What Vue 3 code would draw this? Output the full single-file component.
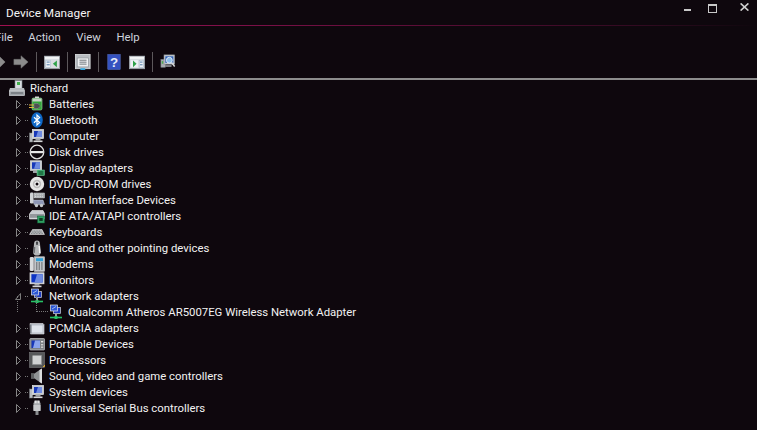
<template>
  <div class="window">
    <div class="titlebar">
      <span class="app-title">Device Manager</span>
      <div class="win-buttons">
        <span class="min"></span>
        <span class="max"></span>
        <svg class="close" width="9" height="8" viewBox="0 0 9 8"><path d="M.6.4 8.4 7.6M8.4.4.6 7.6" stroke="#cfcfcf" stroke-width="1.6" fill="none"/></svg>
      </div>
    </div>

    <div class="menubar">
      <span v-for="m in menus" :key="m">{{ m }}</span>
    </div>

    <div class="toolbar">
      <template v-for="(t, i) in tools" :key="i">
        <i v-if="t === '|'" class="sep"></i>
        <svg v-else class="tool" :class="'tool-' + t" viewBox="0 0 18 18" v-html="toolIcons[t]"></svg>
      </template>
    </div>

    <div class="tree">
      <div class="row root">
        <svg class="ico" viewBox="0 0 16 16" v-html="icons.root"></svg>
        <span>Richard</span>
      </div>
      <template v-for="row in devices" :key="row.name">
        <div class="row" :class="{ open: row.child }">
          <svg class="arrow" width="7" height="9" viewBox="0 0 7 9">
            <path v-if="row.child" d="M5.5 1.5v6h-5z" fill="none" stroke="#7a7a7a"/>
            <path v-else d="M1.5.5 5.5 4.5 1.5 8.5z" fill="none" stroke="#858585"/>
          </svg>
          <i class="dots"></i>
          <svg class="ico" viewBox="0 0 16 16" v-html="icons[row.icon]"></svg>
          <span>{{ row.name }}</span>
        </div>
        <div v-if="row.child" class="row child">
          <i class="trunk"></i>
          <i class="branch"></i>
          <svg class="ico" viewBox="0 0 16 16" v-html="icons.network"></svg>
          <span>{{ row.child }}</span>
        </div>
      </template>
    </div>
  </div>
</template>

<script setup>
const menus = ['File', 'Action', 'View', 'Help']
const tools = ['back', 'forward', '|', 'tree', '|', 'props', '|', 'help', 'pane', '|', 'scan']

const win = (inner) => `<rect x="0.5" y="2.5" width="17" height="14" fill="#d8dde2" stroke="#9aa1a8"/><rect x="1" y="3" width="16" height="2.5" fill="#f2f4f6"/>${inner}`
const toolIcons = {
  back: '<path d="M9 3 15 9 9 15V11.5H0V6.5H9z" fill="#8c8c8c"/>',
  forward: '<path d="M9 2 17 9 9 16V12H1V6H9z" fill="#8c8c8c" stroke="#6f6f6f" stroke-width=".6"/>',
  tree: win('<rect x="2" y="7" width="5.5" height="8" fill="#eef2f6" stroke="#9fb4c8" stroke-width=".6"/><rect x="3" y="8.5" width="3.4" height="1.2" fill="#5f88b0"/><rect x="3" y="11.5" width="3.4" height="1.2" fill="#5f88b0"/><path d="M14.5 7.2V15L10 11z" fill="#2fa24a"/>'),
  props: '<rect x="0.5" y="0.5" width="16.5" height="16" fill="#b8bcc1" stroke="#d4d7da"/><rect x="2.5" y="4.5" width="12.5" height="10" fill="#eef0f2" stroke="#8a9096" stroke-width=".7"/><path d="M5 7h8M5 9.2h8M5 11.4h8" stroke="#666c72" stroke-width="1"/><rect x="6" y="16" width="5.5" height="2" fill="#35a8e0"/>',
  help: '<rect x="2" y="0.5" width="14" height="17" fill="#3552c0" stroke="#5f7bd0" stroke-width=".5"/><text x="9" y="14.5" text-anchor="middle" font-family="Liberation Sans, sans-serif" font-size="15" font-weight="700" fill="#e8ecf8">?</text>',
  pane: win('<rect x="2" y="7" width="8" height="8" fill="#eef2f6"/><path d="M4.5 7.2V15L8.5 11z" fill="#2fa24a"/><rect x="11.5" y="7" width="4.5" height="8" fill="#eef2f6" stroke="#9fb4c8" stroke-width=".6"/><rect x="12.4" y="8.5" width="2.8" height="1.2" fill="#5f88b0"/><rect x="12.4" y="11.5" width="2.8" height="1.2" fill="#5f88b0"/>'),
  scan: '<rect x="1" y="6" width="5" height="9" fill="#a8adb2" stroke="#70757a" stroke-width=".6"/><rect x="2" y="8" width="1.6" height="3" fill="#4cb050"/><rect x="4.5" y="1" width="12" height="10.5" fill="#c9cdd2" stroke="#83888e" stroke-width=".7"/><rect x="6" y="2.6" width="9" height="7.4" fill="#2f62b8"/><circle cx="10.5" cy="7" r="3.3" fill="#8fc0ec" stroke="#e6eef6" stroke-width="1"/><path d="M13 9.5 16.5 14" stroke="#d4d7da" stroke-width="1.6"/><path d="M6 13.5h7" stroke="#a8adb2" stroke-width="1.6"/>',
}

const screen = '<rect x="3.5" y="1.5" width="11" height="9" fill="#c8ccd2" stroke="#e6e8ea" stroke-width=".7"/><rect x="5" y="3" width="8" height="6" fill="#1838b8"/><path d="M9 3h4v6H7z" fill="#6f8be0"/><rect x="6.5" y="10.5" width="5" height="2" fill="#9da1a6"/><rect x="4.5" y="12.5" width="9" height="1.6" fill="#d4d6d8"/>'
const tower = '<rect x="0.5" y="5" width="3.2" height="9" fill="#b8bcc0" stroke="#74787c" stroke-width=".5"/>'
const icons = {
  root: '<rect x="6" y="0.5" width="7" height="8" fill="#d8dce0" stroke="#7f858b" stroke-width=".6"/><rect x="8" y="2" width="3" height="3" fill="#42b04c"/><path d="M1 8h14l1 3H0z" fill="#b4b8bc"/><rect x="0.5" y="11" width="15" height="4.5" fill="#9ea3a8" stroke="#d4d7da" stroke-width=".7"/><path d="M2 13h12" stroke="#5c6166"/>',
  battery: '<rect x="3" y="2" width="10" height="12" rx="1.5" fill="#32a53a" stroke="#a8d8a8" stroke-width=".6"/><rect x="6" y="0.5" width="4" height="1.6" fill="#d5dbd5"/><rect x="3.5" y="2.5" width="9" height="3" fill="#c8d4c8"/><path d="M0 9h5.5M0 11.5h5.5" stroke="#e8b93c" stroke-width="1"/><path d="M5 7.5h4l2.5 2.5-2.5 2.5H5z" fill="#4d4f52" stroke="#8c8f92" stroke-width=".5"/>',
  bluetooth: '<ellipse cx="8" cy="8" rx="5.8" ry="7.8" fill="#0e68c8"/><path d="M5 5.2 10.6 10.6 8 13V3l2.6 2.4L5 10.8" fill="none" stroke="#fff" stroke-width="1.2"/>',
  computer: tower + screen,
  disk: '<circle cx="8" cy="8" r="6.8" fill="#0e070d" stroke="#e0e0e0" stroke-width="1.3"/><rect x="2" y="7" width="12" height="2.2" fill="#e8e8e8"/>',
  display: '<rect x="1.5" y="0.8" width="11" height="9.5" fill="#c8ccd2" stroke="#e6e8ea" stroke-width=".7"/><rect x="3" y="2.3" width="8" height="6.5" fill="#1838b8"/><path d="M7 2.3h4v6.5H5z" fill="#6f8be0"/><rect x="4" y="10.5" width="5" height="2.5" fill="#9da1a6"/><rect x="8" y="10" width="7.5" height="5.5" fill="#2f9f62" stroke="#7fd0a0" stroke-width=".5"/><path d="M9.5 12h4.5M9.5 14h4.5" stroke="#0d3a20" stroke-width=".8"/>',
  dvd: '<circle cx="8" cy="8" r="7.2" fill="#e6e6e6"/><circle cx="8" cy="8" r="4.2" fill="#bcbcbc"/><circle cx="8" cy="8" r="2.6" fill="#f6f6f6"/><circle cx="8" cy="8" r="1.5" fill="#0e070d"/>',
  hid: '<rect x="1" y="0.5" width="3.5" height="11" rx="1.2" fill="#d0d3d6"/><rect x="5" y="1" width="10.5" height="5" fill="#a4a8ac" stroke="#d8dadc" stroke-width=".5"/><path d="M6 2.8h8.5M6 4.6h8.5" stroke="#e8e8e8" stroke-width=".8" stroke-dasharray="1 .7"/><path d="M4 8h10l1.5 4.5H5z" fill="#8d96b6" stroke="#d0d4dc" stroke-width=".5"/><circle cx="7.5" cy="13.5" r="1.7" fill="#c4c8cc"/><circle cx="12.5" cy="13.5" r="1.7" fill="#c4c8cc"/>',
  ide: '<path d="M3 2.5h11l1.5 3v5.5H0.5V6z" fill="#c8ccd0" stroke="#eceeef" stroke-width=".6"/><rect x="1" y="6" width="14" height="3.8" fill="#94989c"/><rect x="8.5" y="8" width="7" height="7" fill="#2f9f62" stroke="#0f5c34" stroke-width=".5"/><rect x="10.3" y="10" width="3.4" height="3" fill="#0d3a20"/>',
  keyboard: '<path d="M3.5 5.5h9.5l2.5 5H0.5z" fill="#c4c7ca" stroke="#f0f0f0" stroke-width=".5"/><path d="M3.5 7h9M2.8 8.2h10.4M2 9.4h12" stroke="#55595d" stroke-width=".7" stroke-dasharray="1 .6"/>',
  mouse: '<path d="M5 4C5 1.6 6.2.5 8 .5S11 1.6 11 4l.8 8.5c0 2-1.6 3-3.8 3s-3.8-1-3.8-3z" fill="#b4b6b8"/><rect x="7.2" y="1.5" width="1.6" height="3.5" rx=".8" fill="#2e3033"/><path d="M5.6 7 5.2 13" stroke="#6e7174" stroke-width="1.4"/><path d="M10.2 6 10.8 13" stroke="#f4f4f4" stroke-width="1.4"/>',
  modem: '<rect x="0.8" y="1" width="4" height="14" rx="1.2" fill="#d8dadc"/><rect x="5.5" y="0.8" width="10" height="14.5" fill="#c2c6ca" stroke="#e6e8ea" stroke-width=".5"/><rect x="7" y="2.2" width="7" height="3" fill="#2ea0d8"/><path d="M7 7h7M7 9h7M7 11h7M7 13h7" stroke="#3c4044" stroke-width="1" stroke-dasharray="1.4 1.2"/>',
  monitor: '<rect x="1" y="0.8" width="14" height="11" fill="#c8ccd2" stroke="#e8eaec" stroke-width=".7"/><rect x="2.4" y="2.2" width="11.2" height="8.2" fill="#0e34c4"/><path d="M8 2.2h5.6v8.2H5.5z" fill="#6f8be0"/><rect x="5.5" y="12" width="5" height="1.6" fill="#9da1a6"/><rect x="3.5" y="13.6" width="9" height="1.6" fill="#d4d6d8"/>',
  network: '<rect x="5.5" y="3.5" width="7" height="6" fill="#1c3cc0" stroke="#d4d8dc" stroke-width=".7"/><rect x="2.5" y="1" width="7" height="6" fill="#2c56d4" stroke="#e4e6e8" stroke-width=".7"/><path d="M4 5 8 2.5" stroke="#9fb8f0"/><path d="M8 10v3" stroke="#d8dadc" stroke-width="1.4"/><path d="M2 13.5h12" stroke="#27c267" stroke-width="1.6"/><rect x="6.5" y="12" width="3" height="3" fill="#27c267"/>',
  pcmcia: '<path d="M1 3.5h13l1 1v9.5H1.5z" fill="#b8bec8" stroke="#e4e6ea" stroke-width=".6"/><rect x="2.5" y="5.5" width="11" height="7" fill="#dfe4ec"/><rect x="1" y="4.5" width="1.5" height="9" fill="#7a8088"/>',
  portable: '<rect x="0.8" y="2.5" width="14.8" height="11.5" rx="1" fill="#7e8286" stroke="#d8dadc" stroke-width=".6"/><rect x="2.5" y="4.5" width="8.5" height="7.5" fill="#1838b8"/><path d="M6 4.5h5V12H4z" fill="#8aa4ec"/><rect x="12" y="5" width="2.2" height="1.4" fill="#e6e6e6"/><rect x="12" y="8" width="2.2" height="1.4" fill="#d0d0d0"/><rect x="12" y="10.5" width="2.2" height="1.4" fill="#d0d0d0"/>',
  cpu: '<rect x="0.5" y="0.5" width="15" height="15" fill="#56585a" stroke="#77797b" stroke-width=".6"/><rect x="3.5" y="3.5" width="9" height="9" fill="#cfd1d2"/><path d="M3.5 12.5h9v-9" fill="none" stroke="#8e9092"/><path d="M14 14.5h1.5V13" fill="none" stroke="#d8a830" stroke-width="1"/>',
  sound: '<path d="M10.5 2 13 .5V15.5L10.5 14 5.5 10.5H2V5.5H5.5z" fill="#8f9294"/><path d="M10.5 2 13 .5V15.5L10.5 14z" fill="#dcdedf"/><rect x="2" y="5.5" width="3" height="5" fill="#5e6062"/>',
  usb: '<path d="M5.5 0.5h5l1 3v7h-7v-7z" fill="#a8abae"/><rect x="6" y="0.8" width="1.6" height="2.4" fill="#e4e4e4"/><rect x="8.6" y="0.8" width="1.6" height="2.4" fill="#e4e4e4"/><rect x="4.5" y="5" width="7" height="6" fill="#c8cacc"/><rect x="6.5" y="11" width="3" height="4" fill="#8a8d90"/>',
}

const devices = [
  { name: 'Batteries', icon: 'battery' },
  { name: 'Bluetooth', icon: 'bluetooth' },
  { name: 'Computer', icon: 'computer' },
  { name: 'Disk drives', icon: 'disk' },
  { name: 'Display adapters', icon: 'display' },
  { name: 'DVD/CD-ROM drives', icon: 'dvd' },
  { name: 'Human Interface Devices', icon: 'hid' },
  { name: 'IDE ATA/ATAPI controllers', icon: 'ide' },
  { name: 'Keyboards', icon: 'keyboard' },
  { name: 'Mice and other pointing devices', icon: 'mouse' },
  { name: 'Modems', icon: 'modem' },
  { name: 'Monitors', icon: 'monitor' },
  { name: 'Network adapters', icon: 'network', child: 'Qualcomm Atheros AR5007EG Wireless Network Adapter' },
  { name: 'PCMCIA adapters', icon: 'pcmcia' },
  { name: 'Portable Devices', icon: 'portable' },
  { name: 'Processors', icon: 'cpu' },
  { name: 'Sound, video and game controllers', icon: 'sound' },
  { name: 'System devices', icon: 'computer' },
  { name: 'Universal Serial Bus controllers', icon: 'usb' },
]
</script>

<style>
html, body {
  margin: 0;
  background: #0e070d;
}
</style>

<style scoped>
.window {
  width: 757px;
  height: 430px;
  overflow: hidden;
  background: #0e070d;
  color: #f2f2f2;
  font-family: Roboto, "Open Sans", sans-serif;
  font-size: 11.35px;
}

.titlebar {
  height: 25px;
  display: flex;
  align-items: center;
  justify-content: space-between;
  padding-left: 6px;
  border-bottom: 1px solid;
  border-image: linear-gradient(to right, #a01050, #80104a 30%, #300a20 85%, #0e070d) 1;
  box-sizing: content-box;
}

.app-title {
  font-size: 11.8px;
  color: #f4f4f4;
}

.win-buttons {
  display: flex;
  align-items: flex-start;
  height: 25px;
}

.min {
  width: 7px;
  height: 2px;
  margin: 9px 17px 0 0;
  background: #c8c8c8;
}

.max {
  width: 7px;
  height: 6px;
  margin: 4px 23px 0 0;
  border: 1px solid #c8c8c8;
  border-top-width: 2px;
}

.close {
  margin: 3px 8px 0 0;
}

.menubar {
  height: 22px;
  display: flex;
  align-items: center;
  gap: 15.5px;
  margin-left: -5px;
  color: #cfd3dc;
}

.toolbar {
  height: 27px;
  padding-bottom: 3px;
  display: flex;
  align-items: center;
  margin-left: -8px;
}

.tool {
  width: 16px;
  height: 16px;
  flex: none;
}

.sep {
  width: 1px;
  height: 20px;
  background: #5c585b;
  flex: none;
  margin: 0 7px;
}

.tool-forward {
  margin-left: 5px;
}

.tool-pane {
  margin-left: 7px;
}

.tree {
  border-top: 2px solid #8c8c8c;
}

.row {
  height: 16px;
  display: flex;
  align-items: center;
  white-space: nowrap;
  position: relative;
}

.root {
  padding-left: 9px;
}

.root .ico {
  margin-right: 5px;
}

.arrow {
  margin-left: 15px;
  flex: none;
}

.dots {
  width: 3px;
  margin: 0 1px 0 3px;
  border-top: 1px dotted #777;
  flex: none;
}

.ico {
  width: 16px;
  height: 16px;
  flex: none;
  margin-right: 4px;
}

.child {
  padding-left: 48px;
}

.trunk {
  position: absolute;
  left: 17px;
  top: -8px;
  height: 16px;
  border-left: 1px dotted #777;
}

.branch {
  position: absolute;
  left: 36px;
  top: -8px;
  width: 11px;
  height: 15px;
  border-left: 1px dotted #777;
  border-bottom: 1px dotted #777;
}
</style>
